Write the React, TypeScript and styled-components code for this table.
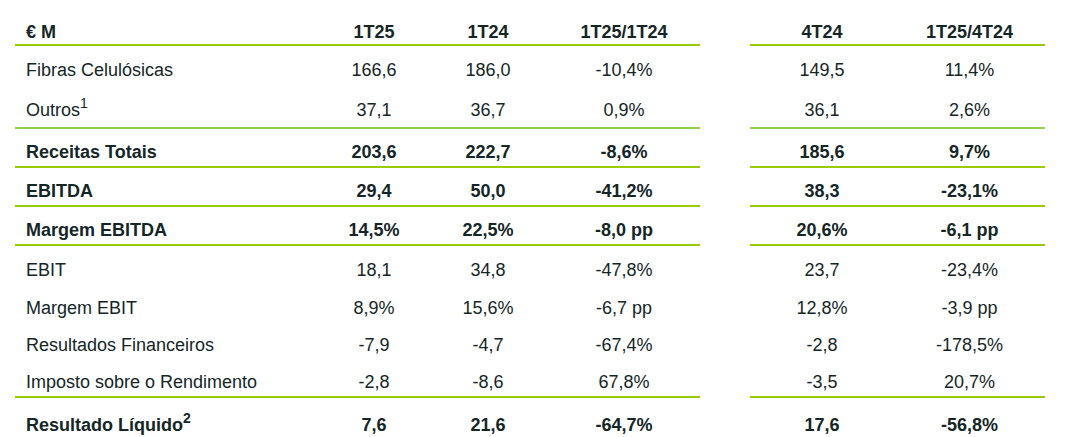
import styled, { createGlobalStyle } from 'styled-components';

type Rule = 'strong' | 'soft';

interface Line {
  label: string;
  note?: string;
  values: [string, string, string, string, string];
  bold?: boolean;
  rule?: Rule;
  pad: [number, number];
}

const COLUMNS = '305px 108px 120px 152px 50px 144px 151px';

const RULES: Record<Rule, string> = {
  strong: '#99cc00',
  soft: '#92d050',
};

const HEADINGS = ['1T25', '1T24', '1T25/1T24', '4T24', '1T25/4T24'];

const LINES: Line[] = [
  { label: 'Fibras Celulósicas', values: ['166,6', '186,0', '-10,4%', '149,5', '11,4%'], pad: [14, 6] },
  { label: 'Outros', note: '1', values: ['37,1', '36,7', '0,9%', '36,1', '2,6%'], rule: 'soft', pad: [14, 7] },
  { label: 'Receitas Totais', values: ['203,6', '222,7', '-8,6%', '185,6', '9,7%'], bold: true, rule: 'strong', pad: [13, 4] },
  { label: 'EBITDA', values: ['29,4', '50,0', '-41,2%', '38,3', '-23,1%'], bold: true, rule: 'strong', pad: [13, 4] },
  { label: 'Margem EBITDA', values: ['14,5%', '22,5%', '-8,0 pp', '20,6%', '-6,1 pp'], bold: true, rule: 'strong', pad: [13, 4] },
  { label: 'EBIT', values: ['18,1', '34,8', '-47,8%', '23,7', '-23,4%'], pad: [14, 4] },
  { label: 'Margem EBIT', values: ['8,9%', '15,6%', '-6,7 pp', '12,8%', '-3,9 pp'], pad: [14, 3] },
  { label: 'Resultados Financeiros', values: ['-7,9', '-4,7', '-67,4%', '-2,8', '-178,5%'], pad: [14, 3] },
  { label: 'Imposto sobre o Rendimento', values: ['-2,8', '-8,6', '67,8%', '-3,5', '20,7%'], rule: 'strong', pad: [14, 4] },
  { label: 'Resultado Líquido', note: '2', values: ['7,6', '21,6', '-64,7%', '17,6', '-56,8%'], bold: true, pad: [17, 4] },
];

const GlobalStyle = createGlobalStyle`
  body {
    margin: 0;
    background: #ffffff;
    font-family: "Liberation Sans", Arial, sans-serif;
    color: #142626;
  }
`;

export default function App() {
  return (
    <>
      <GlobalStyle />
      <Table>
        <Row $bold $rule="strong" $pad={[22, 2]}>
          <LabelCell>€ M</LabelCell>
          {HEADINGS.slice(0, 3).map((h) => (
            <ValueCell key={h}>{h}</ValueCell>
          ))}
          <Spacer />
          {HEADINGS.slice(3).map((h) => (
            <ValueCell key={h}>{h}</ValueCell>
          ))}
        </Row>
        {LINES.map((line) => (
          <Row key={line.label} $bold={line.bold} $rule={line.rule} $pad={line.pad}>
            <LabelCell>
              {line.label}
              {line.note && <Note>{line.note}</Note>}
            </LabelCell>
            {line.values.slice(0, 3).map((v, i) => (
              <ValueCell key={i}>{v}</ValueCell>
            ))}
            <Spacer />
            {line.values.slice(3).map((v, i) => (
              <ValueCell key={i + 3}>{v}</ValueCell>
            ))}
          </Row>
        ))}
      </Table>
    </>
  );
}

const Table = styled.div`
  display: flex;
  flex-direction: column;
  margin-left: 15px;
  width: 1030px;
`;

const Cell = styled.div`
  font-size: 18px;
  line-height: 20px;
  white-space: nowrap;
`;

const LabelCell = styled(Cell)`
  padding-left: 11px;
  text-align: left;
`;

const ValueCell = styled(Cell)`
  text-align: center;
`;

const Spacer = styled.div``;

const Row = styled.div<{ $bold?: boolean; $rule?: Rule; $pad: [number, number] }>`
  display: grid;
  grid-template-columns: ${COLUMNS};
  font-weight: ${({ $bold }) => ($bold ? 700 : 400)};

  & > ${Cell} {
    padding-top: ${({ $pad }) => $pad[0]}px;
    padding-bottom: ${({ $pad }) => $pad[1]}px;
    border-bottom: ${({ $rule }) => ($rule ? `2px solid ${RULES[$rule]}` : 'none')};
  }
`;

const Note = styled.sup`
  font-size: 14px;
  line-height: 0;
  vertical-align: 8px;
`;
